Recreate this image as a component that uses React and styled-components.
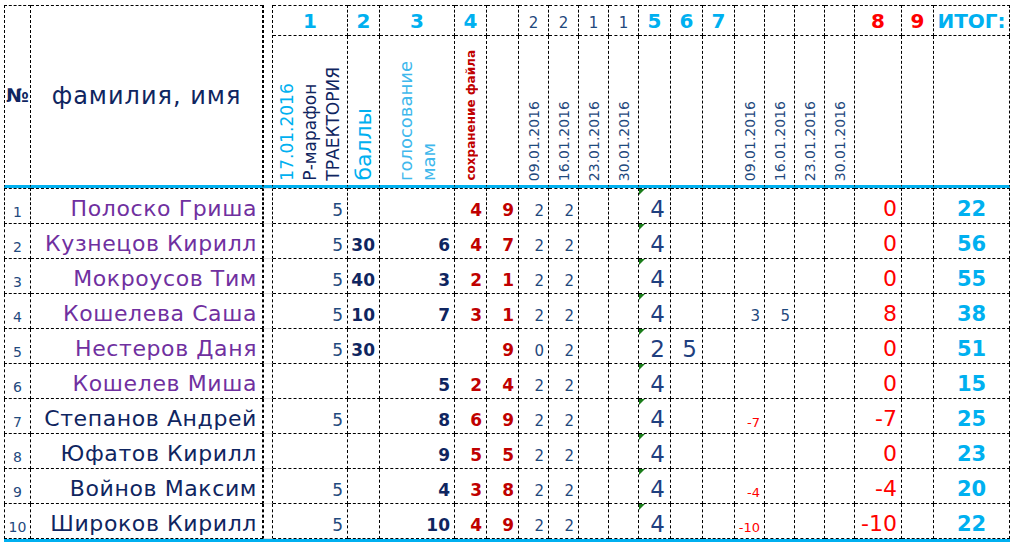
import React from 'react';
import styled, { createGlobalStyle, css } from 'styled-components';

const GlobalStyle = createGlobalStyle`
  html, body {
    margin: 0;
    padding: 0;
    background: #fff;
  }
  body {
    font-family: 'DejaVu Sans', 'Liberation Sans', sans-serif;
  }
`;

const Sheet = styled.div`
  padding: 5px 0 0 4px;
`;

const Table = styled.table`
  border-collapse: separate;
  border-spacing: 0;
  table-layout: fixed;
  width: 1006px;
  border-bottom: 3px solid #00b0f0;
`;

const Cell = styled.td`
  box-sizing: border-box;
  padding: 0 4px 4px 0;
  border-right: 1px dashed #000;
  border-bottom: 1px dashed #000;
  vertical-align: bottom;
  text-align: right;
  white-space: nowrap;
  line-height: 1;
  ${p => p.$first && css`border-top: 1px dashed #000;`}
`;

// header, first row: the column numbers
const NumHead = styled(Cell)`
  border-top: 1px dashed #000;
  text-align: center;
  padding: 0 0 4px;
  font-size: ${p => (p.$thin ? '15px' : '20px')};
  font-weight: ${p => (p.$thin ? 'normal' : 'bold')};
  color: ${p => p.$color || (p.$thin ? '#1f497d' : '#00b0f0')};
`;

// header, second row: rotated captions
const CaptionHead = styled(Cell)`
  border-bottom: 3px solid #00b0f0;
  text-align: center;
  padding: 0 0 4px;
  line-height: 0;
`;

const VText = styled.div`
  display: inline-block;
  vertical-align: bottom;
  writing-mode: vertical-rl;
  transform: rotate(180deg);
  text-align: left;
  white-space: nowrap;
  font-size: ${p => p.$size || 14}px;
  line-height: ${p => p.$lh || 18}px;
  font-weight: ${p => (p.$bold ? 'bold' : 'normal')};
  color: ${p => p.$color || '#1f497d'};
`;

const Tint = styled.span`
  color: ${p => p.$color};
`;

const CornerHead = styled(Cell)`
  border-top: 1px dashed #000;
  border-bottom: 3px solid #00b0f0;
  border-left: ${p => (p.$left ? '1px dashed #000' : 'none')};
  vertical-align: middle;
  text-align: center;
  padding: 0;
  color: #0f2560;
  font-size: ${p => (p.$bold ? '19px' : '24px')};
  font-weight: ${p => (p.$bold ? 'bold' : 'normal')};
  letter-spacing: ${p => (p.$bold ? '0' : '1px')};
`;

const GapHead = styled(Cell)`
  border-left: 1px dashed #000;
  border-bottom: 3px solid #00b0f0;
  padding: 0;
`;

const GapCell = styled(Cell)`
  border-left: 1px dashed #000;
  border-bottom: 1px solid #dcdcdc;
  border-top: ${p => (p.$first ? '1px solid #dcdcdc' : 'none')};
  padding: 0;
`;

const RowNum = styled(Cell)`
  border-left: 1px dashed #000;
  text-align: center;
  padding: 0 0 4px;
  font-size: 14px;
  color: #1f497d;
`;

const NameCell = styled(Cell)`
  padding: 0 5px 3px 0;
  font-size: 22px;
  letter-spacing: 0.6px;
  color: ${p => (p.$purple ? '#7030a0' : '#0f2560')};
`;

const tones = {
  thin: css`font-size: 17px; color: #1f497d;`,
  bold: css`font-size: 17px; font-weight: bold; color: #0f2560;`,
  red: css`font-size: 17px; font-weight: bold; color: #c00000;`,
  small: css`font-size: 15px; color: #1f497d;`,
  big: css`font-size: 23px; color: #1f3f7f; padding-right: 5px; padding-bottom: 2px;`,
  minus: css`font-size: 13px; color: #ff0000;`,
  fine: css`font-size: 22px; color: #ff0000; padding-bottom: 3px;`,
  total: css`font-size: 21px; font-weight: bold; color: #00b0f0; text-align: center; padding: 0 0 3px;`,
};

const ValueCell = styled(Cell)`
  position: relative;
  ${p => tones[p.$tone]}
  ${p =>
    p.$flag &&
    css`
      &::before {
        content: '';
        position: absolute;
        left: 0;
        top: 0;
        border-top: 6px solid #1b7d1b;
        border-right: 6px solid transparent;
      }
    `}
`;

const HeadRow = styled.tr`
  height: ${p => p.$h}px;
`;

const BodyRow = styled.tr`
  height: ${p => (p.$first ? 36 : 35)}px;
`;

const widths = [27, 232, 10, 75, 32, 75, 32, 32, 30, 30, 30, 30, 32, 32, 32, 30, 30, 30, 30, 47, 32, 76];

const colTones = [
  'thin', 'bold', 'bold', 'red', 'red',
  'small', 'small', 'small', 'small',
  'big', 'big', 'big',
  'note', 'note', 'note', 'note',
  'fine', 'fine', 'total',
];

const topNumbers = [
  { t: '1' }, { t: '2' }, { t: '3' }, { t: '4' }, { t: '' },
  { t: '2', thin: true }, { t: '2', thin: true }, { t: '1', thin: true }, { t: '1', thin: true },
  { t: '5' }, { t: '6' }, { t: '7' },
  { t: '' }, { t: '' }, { t: '' }, { t: '' },
  { t: '8', color: '#ff0000' }, { t: '9', color: '#ff0000' }, { t: 'ИТОГ:' },
];

const dates = ['09.01.2016', '16.01.2016', '23.01.2016', '30.01.2016'];

const rows = [
  { name: 'Полоско Гриша', purple: true, v: ['5', '', '', '4', '9', '2', '2', '', '', '4', '', '', '', '', '', '', '0', '', '22'] },
  { name: 'Кузнецов Кирилл', purple: true, v: ['5', '30', '6', '4', '7', '2', '2', '', '', '4', '', '', '', '', '', '', '0', '', '56'] },
  { name: 'Мокроусов Тим', purple: true, v: ['5', '40', '3', '2', '1', '2', '2', '', '', '4', '', '', '', '', '', '', '0', '', '55'] },
  { name: 'Кошелева Саша', purple: true, v: ['5', '10', '7', '3', '1', '2', '2', '', '', '4', '', '', '3', '5', '', '', '8', '', '38'] },
  { name: 'Нестеров Даня', purple: true, v: ['5', '30', '', '', '9', '0', '2', '', '', '2', '5', '', '', '', '', '', '0', '', '51'] },
  { name: 'Кошелев Миша', purple: true, v: ['', '', '5', '2', '4', '2', '2', '', '', '4', '', '', '', '', '', '', '0', '', '15'] },
  { name: 'Степанов Андрей', v: ['5', '', '8', '6', '9', '2', '2', '', '', '4', '', '', '-7', '', '', '', '-7', '', '25'] },
  { name: 'Юфатов Кирилл', v: ['', '', '9', '5', '5', '2', '2', '', '', '4', '', '', '', '', '', '', '0', '', '23'] },
  { name: 'Войнов Максим', v: ['5', '', '4', '3', '8', '2', '2', '', '', '4', '', '', '-4', '', '', '', '-4', '', '20'] },
  { name: 'Широков Кирилл', v: ['5', '', '10', '4', '9', '2', '2', '', '', '4', '', '', '-10', '', '', '', '-10', '', '22'] },
];

function toneFor(col, value) {
  const t = colTones[col];
  if (t === 'note') return value.startsWith('-') ? 'minus' : 'small';
  return t;
}

function DateHead({ date }) {
  return (
    <CaptionHead>
      <VText $size={14}>{date}</VText>
    </CaptionHead>
  );
}

export default function App() {
  return (
    <Sheet>
      <GlobalStyle />
      <Table>
        <colgroup>
          {widths.map((w, i) => (
            <col key={i} style={{ width: w }} />
          ))}
        </colgroup>
        <thead>
          <HeadRow $h={31}>
            <CornerHead rowSpan={2} $left $bold>№</CornerHead>
            <CornerHead rowSpan={2}>фамилия, имя</CornerHead>
            <GapHead rowSpan={2} />
            {topNumbers.map((h, i) => (
              <NumHead key={i} $thin={h.thin} $color={h.color}>{h.t}</NumHead>
            ))}
          </HeadRow>
          <HeadRow $h={152}>
            <CaptionHead>
              <VText $size={17} $lh={23} $color="#0f2560">
                <Tint $color="#00b0f0">17.01.2016</Tint>
                <br />
                Р-марафон
                <br />
                ТРАЕКТОРИЯ
              </VText>
            </CaptionHead>
            <CaptionHead>
              <VText $size={22} $lh={26} $color="#00b0f0">баллы</VText>
            </CaptionHead>
            <CaptionHead>
              <VText $size={18} $lh={23} $color="#3fb8ec">
                голосование
                <br />
                мам
              </VText>
            </CaptionHead>
            <CaptionHead>
              <VText $size={12} $lh={16} $bold $color="#c00000">сохранение файла</VText>
            </CaptionHead>
            <CaptionHead />
            {dates.map(d => (
              <DateHead key={d} date={d} />
            ))}
            <CaptionHead />
            <CaptionHead />
            <CaptionHead />
            {dates.map(d => (
              <DateHead key={'b' + d} date={d} />
            ))}
            <CaptionHead />
            <CaptionHead />
            <CaptionHead />
          </HeadRow>
        </thead>
        <tbody>
          {rows.map((r, ri) => (
            <BodyRow key={ri} $first={ri === 0}>
              <RowNum $first={ri === 0}>{ri + 1}</RowNum>
              <NameCell $first={ri === 0} $purple={r.purple}>{r.name}</NameCell>
              <GapCell $first={ri === 0} />
              {r.v.map((val, ci) => (
                <ValueCell key={ci} $first={ri === 0} $tone={toneFor(ci, val)} $flag={ci === 9}>
                  {val}
                </ValueCell>
              ))}
            </BodyRow>
          ))}
        </tbody>
      </Table>
    </Sheet>
  );
}
